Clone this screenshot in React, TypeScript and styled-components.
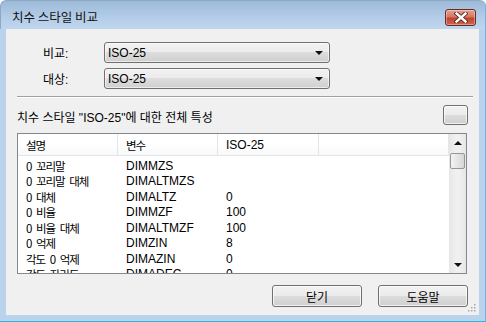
import { Fragment } from 'react'
import styled, { createGlobalStyle } from 'styled-components'

const GlobalStyle = createGlobalStyle`
  html, body {
    margin: 0;
    padding: 0;
    background: #ffffff;
  }
  * {
    box-sizing: border-box;
  }
`

const FONT = `"Liberation Sans", "Noto Sans CJK KR", sans-serif`
const KO_FONT = `"Noto Sans CJK KR", sans-serif`

const rows = [
  { desc: '0 꼬리말', name: 'DIMMZS', value: '' },
  { desc: '0 꼬리말 대체', name: 'DIMALTMZS', value: '' },
  { desc: '0 대체', name: 'DIMALTZ', value: '0' },
  { desc: '0 비율', name: 'DIMMZF', value: '100' },
  { desc: '0 비율 대체', name: 'DIMALTMZF', value: '100' },
  { desc: '0 억제', name: 'DIMZIN', value: '8' },
  { desc: '각도 0 억제', name: 'DIMAZIN', value: '0' },
  { desc: '각도 자리도', name: 'DIMADEC', value: '0' },
]

const StyledWindow = styled.div`
  width: 486px;
  height: 322px;
  display: flex;
  flex-direction: column;
  background: #bad3ec;
  border-right: 1px solid #6fb6dc;
  border-bottom: 1px solid #2cb6dd;
  border-radius: 6px 6px 0 0;
  font-family: ${FONT};
  font-size: 12px;
  color: #000;
  overflow: hidden;
`

const StyledTitleBar = styled.div`
  height: 29px;
  flex: none;
  display: flex;
  align-items: center;
  justify-content: space-between;
  padding: 0 9px 0 11px;
  background: linear-gradient(#9dbad8, #b4cde8 60%, #bfd6ee);
  border-left: 1px solid #8ea9c6;
  border-top: 1px solid #8ea9c6;
  border-radius: 6px 6px 0 0;
`

const StyledTitle = styled.span`
  font-family: ${KO_FONT};
  font-size: 12.5px;
  color: #111;
  margin-top: 3px;
`

const StyledClose = styled.div`
  width: 31px;
  height: 17px;
  margin-top: 5px;
  border: 1px solid #6b2b25;
  border-radius: 3px;
  background: linear-gradient(#e3a190, #d57863 45%, #c2432d 55%, #cc6750);
  display: flex;
  align-items: center;
  justify-content: center;
  box-shadow: inset 0 0 0 1px rgba(255, 255, 255, 0.35);
`

const StyledClient = styled.div`
  position: relative;
  flex: 1;
  margin: 0 6px 6px 6px;
  background: #f0f0f0;
  padding: 13px 11px 0 11px;
  display: flex;
  flex-direction: column;
`

const StyledComboRow = styled.div`
  display: flex;
  align-items: center;
  height: 21px;
  & + & {
    margin-top: 5px;
  }
`

const StyledLabel = styled.span`
  width: 61px;
  margin-left: 26px;
  font-size: 12px;
`

const StyledCombo = styled.div`
  width: 226px;
  height: 21px;
  border: 1px solid #707070;
  border-radius: 3px;
  background: linear-gradient(#f2f2f2, #ebebeb 50%, #dddddd 50%, #cfcfcf);
  display: flex;
  align-items: center;
  justify-content: space-between;
  padding: 0 6px 0 3px;
  box-shadow: inset 0 0 0 1px rgba(255, 255, 255, 0.6);
`

const StyledArrow = styled.span<{ $up?: boolean }>`
  width: 0;
  height: 0;
  border-left: 4px solid transparent;
  border-right: 4px solid transparent;
  ${({ $up }) => ($up ? 'border-bottom: 4px solid #111;' : 'border-top: 4px solid #111;')}
`

const StyledSeparator = styled.div`
  margin: 7px -5px 0 0;
  border-top: 1px solid #a0a0a0;
  border-bottom: 1px solid #ffffff;
`

const StyledSectionRow = styled.div`
  margin-top: 7px;
  height: 20px;
  display: flex;
  align-items: center;
  justify-content: space-between;
`

const StyledSectionTitle = styled.span`
  font-size: 12px;
  margin-top: 2px;
`

const StyledButton = styled.div<{ $width: number }>`
  width: ${({ $width }) => $width}px;
  height: 100%;
  border: 1px solid #707070;
  border-radius: 3px;
  background: linear-gradient(#f2f2f2, #ebebeb 50%, #dddddd 50%, #cfcfcf);
  box-shadow: inset 0 0 0 1px rgba(255, 255, 255, 0.7);
  display: flex;
  align-items: center;
  justify-content: center;
  font-family: ${KO_FONT};
  font-size: 12px;
`

const StyledList = styled.div`
  margin-top: 8px;
  margin-right: 1px;
  height: 141px;
  border: 1px solid #828790;
  background: #ffffff;
  display: flex;
  overflow: hidden;
`

const StyledListBody = styled.div`
  flex: 1;
  overflow: hidden;
`

const StyledGrid = styled.div`
  display: grid;
  grid-template-columns: 100px 100px 101px 1fr;
`

const StyledHeaderCell = styled.div<{ $ko?: boolean }>`
  height: 22px;
  display: flex;
  align-items: center;
  padding-left: 8px;
  background: linear-gradient(#ffffff 50%, #f7f8f9);
  border-right: 1px solid #e3e5e8;
  border-bottom: 1px solid #e3e5e8;
  font-family: ${({ $ko }) => ($ko ? KO_FONT : FONT)};
  font-size: ${({ $ko }) => ($ko ? 11.5 : 12)}px;
  letter-spacing: ${({ $ko }) => ($ko ? '-1px' : '0')};
`

const StyledCell = styled.div<{ $ko?: boolean }>`
  height: 15.5px;
  display: flex;
  align-items: center;
  padding-left: 8px;
  white-space: pre;
  font-family: ${({ $ko }) => ($ko ? KO_FONT : FONT)};
  font-size: ${({ $ko }) => ($ko ? 11.5 : 12)}px;
  letter-spacing: ${({ $ko }) => ($ko ? '-1px' : '0')};
  word-spacing: ${({ $ko }) => ($ko ? '3px' : '0')};
`

const StyledRowGap = styled.div`
  height: 2px;
`

const StyledScrollbar = styled.div`
  width: 17px;
  flex: none;
  background: linear-gradient(90deg, #e6e6e6, #f0f0f0 40%, #f0f0f0 60%, #e6e6e6);
  display: flex;
  flex-direction: column;
  align-items: center;
`

const StyledScrollButton = styled.div`
  height: 17px;
  width: 100%;
  display: flex;
  align-items: center;
  justify-content: center;
`

const StyledThumb = styled.div`
  width: 15px;
  height: 16px;
  margin-top: 2px;
  border: 1px solid #979797;
  border-radius: 2px;
  background: linear-gradient(90deg, #f4f4f4, #e4e4e4 50%, #d6d6d6);
`

const StyledTrack = styled.div`
  flex: 1;
`

const StyledButtonRow = styled.div`
  margin-top: 11px;
  height: 22px;
  display: flex;
  justify-content: flex-end;
  gap: 16px;
`

const StyledGrip = styled.svg`
  position: absolute;
  right: 2px;
  bottom: 2px;
`

function CloseGlyph() {
  return (
    <svg width="14" height="11" viewBox="0 0 14 11">
      <path d="M2.5 1.5 L11.5 9.5 M11.5 1.5 L2.5 9.5" stroke="#5a2520" strokeWidth="4.2" strokeLinecap="square" />
      <path d="M2.5 1.5 L11.5 9.5 M11.5 1.5 L2.5 9.5" stroke="#ffffff" strokeWidth="2.4" strokeLinecap="square" />
    </svg>
  )
}

function Grip() {
  const dots = [
    [9, 1],
    [9, 4],
    [6, 4],
    [9, 7],
    [6, 7],
    [3, 7],
  ]
  return (
    <StyledGrip width="12" height="10" viewBox="0 0 12 10">
      {dots.map(([x, y]) => (
        <rect key={`${x}-${y}`} x={x} y={y} width="1.5" height="1.5" fill="#a8a8a8" />
      ))}
    </StyledGrip>
  )
}

export default function App() {
  return (
    <>
      <GlobalStyle />
      <StyledWindow>
        <StyledTitleBar>
          <StyledTitle>치수 스타일 비교</StyledTitle>
          <StyledClose>
            <CloseGlyph />
          </StyledClose>
        </StyledTitleBar>
        <StyledClient>
          <StyledComboRow>
            <StyledLabel>비교:</StyledLabel>
            <StyledCombo>
              <span>ISO-25</span>
              <StyledArrow />
            </StyledCombo>
          </StyledComboRow>
          <StyledComboRow>
            <StyledLabel>대상:</StyledLabel>
            <StyledCombo>
              <span>ISO-25</span>
              <StyledArrow />
            </StyledCombo>
          </StyledComboRow>
          <StyledSeparator />
          <StyledSectionRow>
            <StyledSectionTitle>치수 스타일 "ISO-25"에 대한 전체 특성</StyledSectionTitle>
            <StyledButton $width={25} />
          </StyledSectionRow>
          <StyledList>
            <StyledListBody>
              <StyledGrid>
                <StyledHeaderCell $ko>설명</StyledHeaderCell>
                <StyledHeaderCell $ko>변수</StyledHeaderCell>
                <StyledHeaderCell>ISO-25</StyledHeaderCell>
                <StyledHeaderCell />
              </StyledGrid>
              <StyledRowGap />
              <StyledGrid>
                {rows.map((row) => (
                  <Fragment key={row.name}>
                    <StyledCell $ko>{row.desc}</StyledCell>
                    <StyledCell>{row.name}</StyledCell>
                    <StyledCell>{row.value}</StyledCell>
                    <StyledCell />
                  </Fragment>
                ))}
              </StyledGrid>
            </StyledListBody>
            <StyledScrollbar>
              <StyledScrollButton>
                <StyledArrow $up />
              </StyledScrollButton>
              <StyledThumb />
              <StyledTrack />
              <StyledScrollButton>
                <StyledArrow />
              </StyledScrollButton>
            </StyledScrollbar>
          </StyledList>
          <StyledButtonRow>
            <StyledButton $width={90}>닫기</StyledButton>
            <StyledButton $width={90}>도움말</StyledButton>
          </StyledButtonRow>
          <Grip />
        </StyledClient>
      </StyledWindow>
    </>
  )
}
